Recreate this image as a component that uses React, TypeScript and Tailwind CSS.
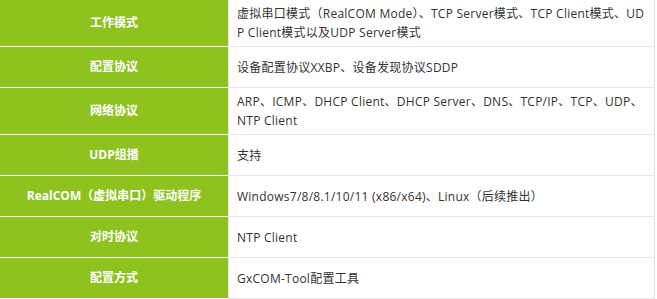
import React from "react";

const rows: [string, string][] = [
  ["工作模式", "虚拟串口模式（RealCOM Mode）、TCP Server模式、TCP Client模式、UDP Client模式以及UDP Server模式"],
  ["配置协议", "设备配置协议XXBP、设备发现协议SDDP"],
  ["网络协议", "ARP、ICMP、DHCP Client、DHCP Server、DNS、TCP/IP、TCP、UDP、NTP Client"],
  ["UDP组播", "支持"],
  ["RealCOM（虚拟串口）驱动程序", "Windows7/8/8.1/10/11 (x86/x64)、Linux（后续推出）"],
  ["对时协议", "NTP Client"],
  ["配置方式", "GxCOM-Tool配置工具"],
];

export default function App() {
  return (
    <div
      className="w-[657px] h-[299px] bg-white overflow-hidden"
      style={{ fontFamily: '"Open Sans", "Noto Sans CJK SC", sans-serif' }}
    >
      <div className="w-[655px] border-r border-[#e3e3e3] flex flex-col">
        {rows.map(([k, v], i) => (
          <div key={i} className="grid grid-cols-[228px_1fr]">
            <div className="bg-[#8dc21f] border-b border-white flex items-center justify-center text-white font-bold text-[12px] leading-[20px] px-2 text-center">
              {k}
            </div>
            <div className="border-b border-[#e6e6e6] border-l border-l-[#e6e6e6] min-h-[41px] pt-[4px] pb-[4px] pl-2 pr-[6px] flex items-center text-[#333] text-[12px] tracking-[0.25px] leading-[19px] break-all">
              <span>{v}</span>
            </div>
          </div>
        ))}
      </div>
    </div>
  );
}
